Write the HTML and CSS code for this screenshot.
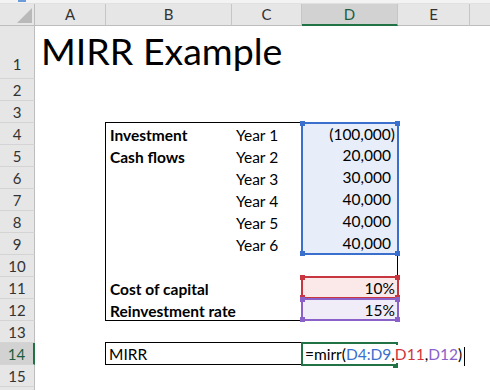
FILE: index.html
```html
<!DOCTYPE html>
<html lang="en">
<head>
    <meta charset="UTF-8">
    <title>MIRR Example</title>
    <link rel="stylesheet" href="styles.css">
</head>
<body>
    <div class="topbar"><span class="topbar-btn"></span></div>

    <div class="sheet">
        <!-- column headers -->
        <div class="corner"><span class="corner-tri"></span></div>
        <div class="col-hdr">A</div>
        <div class="col-hdr">B</div>
        <div class="col-hdr">C</div>
        <div class="col-hdr active">D</div>
        <div class="col-hdr">E</div>
        <div class="col-hdr last"></div>

        <!-- row headers -->
        <div class="row-hdr r1">1</div>
        <div class="row-hdr" style="grid-row: 3">2</div>
        <div class="row-hdr" style="grid-row: 4">3</div>
        <div class="row-hdr" style="grid-row: 5">4</div>
        <div class="row-hdr" style="grid-row: 6">5</div>
        <div class="row-hdr" style="grid-row: 7">6</div>
        <div class="row-hdr" style="grid-row: 8">7</div>
        <div class="row-hdr" style="grid-row: 9">8</div>
        <div class="row-hdr" style="grid-row: 10">9</div>
        <div class="row-hdr" style="grid-row: 11">10</div>
        <div class="row-hdr" style="grid-row: 12">11</div>
        <div class="row-hdr" style="grid-row: 13">12</div>
        <div class="row-hdr" style="grid-row: 14">13</div>
        <div class="row-hdr active" style="grid-row: 15">14</div>
        <div class="row-hdr" style="grid-row: 16">15</div>
        <div class="row-hdr" style="grid-row: 17"></div>

        <!-- title -->
        <div class="title">MIRR Example</div>

        <!-- bordered input block B4:D12 -->
        <div class="input-box"></div>

        <div class="cell label" style="grid-row: 5">Investment</div>
        <div class="cell label" style="grid-row: 6">Cash flows</div>
        <div class="cell label" style="grid-row: 12">Cost of capital</div>
        <div class="cell label" style="grid-row: 13">Reinvestment rate</div>

        <div class="cell year" style="grid-row: 5">Year 1</div>
        <div class="cell year" style="grid-row: 6">Year 2</div>
        <div class="cell year" style="grid-row: 7">Year 3</div>
        <div class="cell year" style="grid-row: 8">Year 4</div>
        <div class="cell year" style="grid-row: 9">Year 5</div>
        <div class="cell year" style="grid-row: 10">Year 6</div>

        <div class="range range-blue">
            <div class="num neg">(100,000)</div>
            <div class="num">20,000</div>
            <div class="num">30,000</div>
            <div class="num">40,000</div>
            <div class="num">40,000</div>
            <div class="num">40,000</div>
            <span class="handle tl"></span><span class="handle tr"></span>
            <span class="handle bl"></span><span class="handle br"></span>
        </div>

        <div class="range range-red">
            <div class="num neg">10%</div>
            <span class="handle tl"></span><span class="handle tr"></span>
            <span class="handle bl"></span><span class="handle br"></span>
        </div>

        <div class="range range-purple">
            <div class="num neg">15%</div>
            <span class="handle tl"></span><span class="handle tr"></span>
            <span class="handle bl"></span><span class="handle br"></span>
        </div>

        <!-- result row -->
        <div class="cell mirr-box">MIRR</div>
        <div class="active-cell">
            <span class="formula">=mirr(<span class="ref-blue">D4:D9</span>,<span class="ref-red">D11</span>,<span class="ref-purple">D12</span>)<span class="caret"></span></span>
            <span class="fill-handle"></span>
        </div>
    </div>
</body>
</html>
```

FILE: styles.css
```css
body {
    margin: 0;
    padding: 0;
    background: #ffffff;
    font-family: "Lato", "Liberation Sans", sans-serif;
    color: #000;
    overflow: hidden;
}

.topbar {
    height: 4px;
    background: #f3f3f3;
    border-bottom: 1px solid #e1e1e1;
    box-sizing: border-box;
    position: relative;
}

.topbar-btn {
    position: absolute;
    left: 18px;
    top: 0;
    width: 8px;
    height: 2px;
    background: #6d9ad8;
}

.sheet {
    display: grid;
    grid-template-columns: 35px 71px 126px 70px 96px 72px 20px;
    grid-template-rows: 22px 53px repeat(14, 22px) 4px;
    width: 490px;
}

/* headers */
.corner {
    grid-row: 1;
    grid-column: 1;
    background: #e6e6e6;
    border-right: 1px solid #bdbdbd;
    border-bottom: 1px solid #bdbdbd;
    box-sizing: border-box;
    position: relative;
}

.corner-tri {
    position: absolute;
    right: 2px;
    bottom: 2px;
    width: 0;
    height: 0;
    border-left: 15px solid transparent;
    border-bottom: 15px solid #b9b9b9;
}

.col-hdr {
    grid-row: 1;
    background: #e6e6e6;
    border-right: 1px solid #c6c6c6;
    border-bottom: 1px solid #bdbdbd;
    box-sizing: border-box;
    font-size: 15px;
    line-height: 21px;
    text-align: center;
    color: #333;
}

.col-hdr.active {
    background: #d2d2d2;
    color: #1d5d3d;
    border-bottom: 2px solid #217346;
}

.col-hdr.last {
    border-right: none;
}

.row-hdr {
    grid-column: 1;
    background: #e6e6e6;
    border-right: 1px solid #bdbdbd;
    border-bottom: 1px solid #d4d4d4;
    box-sizing: border-box;
    font-size: 15px;
    line-height: 22px;
    text-align: center;
    color: #333;
}

.row-hdr.r1 {
    grid-row: 2;
    line-height: 76px;
}

.row-hdr.active {
    background: #d2d2d2;
    color: #1d5d3d;
    border-right: 2px solid #217346;
}

/* body cells */
.title {
    grid-row: 2;
    grid-column: 2;
    align-self: end;
    font-size: 37.5px;
    line-height: 44px;
    padding: 0 0 6px 6px;
    white-space: nowrap;
    z-index: 2;
}

.input-box {
    grid-row: 5 / 14;
    grid-column: 3 / 6;
    border: 1px solid #000;
    margin: -1px 0 0 -1px;
    z-index: 0;
}

.cell {
    font-size: 15.5px;
    line-height: 22px;
    padding: 1px 4px 0;
    white-space: nowrap;
    z-index: 1;
}

.label {
    grid-column: 3;
    font-weight: bold;
}

.year {
    grid-column: 4;
}

.range {
    grid-column: 5;
    position: relative;
    border: 2px solid;
    margin: -1px -1px 0 -1px;
    z-index: 2;
}

.range-blue {
    grid-row: 5 / 11;
    background: #e8eef9;
    border-color: #3b6fcd;
    color: #3b6fcd;
}

.range-red {
    grid-row: 12;
    background: #fbe9ea;
    border-color: #c8363f;
    color: #c8363f;
}

.range-purple {
    grid-row: 13;
    background: #f0ecf8;
    border-color: #8a61c8;
    color: #8a61c8;
    z-index: 3;
}

.num {
    color: #000;
    font-size: 15.5px;
    line-height: 22px;
    height: 22px;
    text-align: right;
    padding-right: 6px;
}

.range-blue .num:first-child,
.range-red .num,
.range-purple .num {
    height: 20px;
    line-height: 20px;
}

.num.neg {
    padding-right: 2px;
}

.handle {
    position: absolute;
    width: 5px;
    height: 5px;
    background: currentColor;
}

.handle.tl { left: -3px; top: -3px; }
.handle.tr { right: -3px; top: -3px; }
.handle.bl { left: -3px; bottom: -3px; }
.handle.br { right: -3px; bottom: -3px; }

.mirr-box {
    grid-row: 15;
    grid-column: 3 / 5;
    border: 1px solid #000;
    margin: -1px 0 0 -1px;
    line-height: 20px;
    padding-left: 3px;
}

.active-cell {
    grid-row: 15;
    grid-column: 5;
    border: 2px solid #217346;
    margin: -1px 0 -1px -1px;
    position: relative;
    z-index: 3;
    background: #fff;
}

.formula {
    font-size: 15.5px;
    line-height: 20px;
    padding-left: 2px;
    white-space: nowrap;
    background: #fff;
    position: relative;
}

.ref-blue { color: #3b6fcd; }
.ref-red { color: #d1343b; }
.ref-purple { color: #8a61c8; }

.caret {
    display: inline-block;
    width: 1px;
    height: 19px;
    background: #000;
    vertical-align: middle;
    margin-left: 2px;
}

.fill-handle {
    position: absolute;
    right: -2px;
    bottom: -4px;
    width: 5px;
    height: 3px;
    background: #217346;
}
```
